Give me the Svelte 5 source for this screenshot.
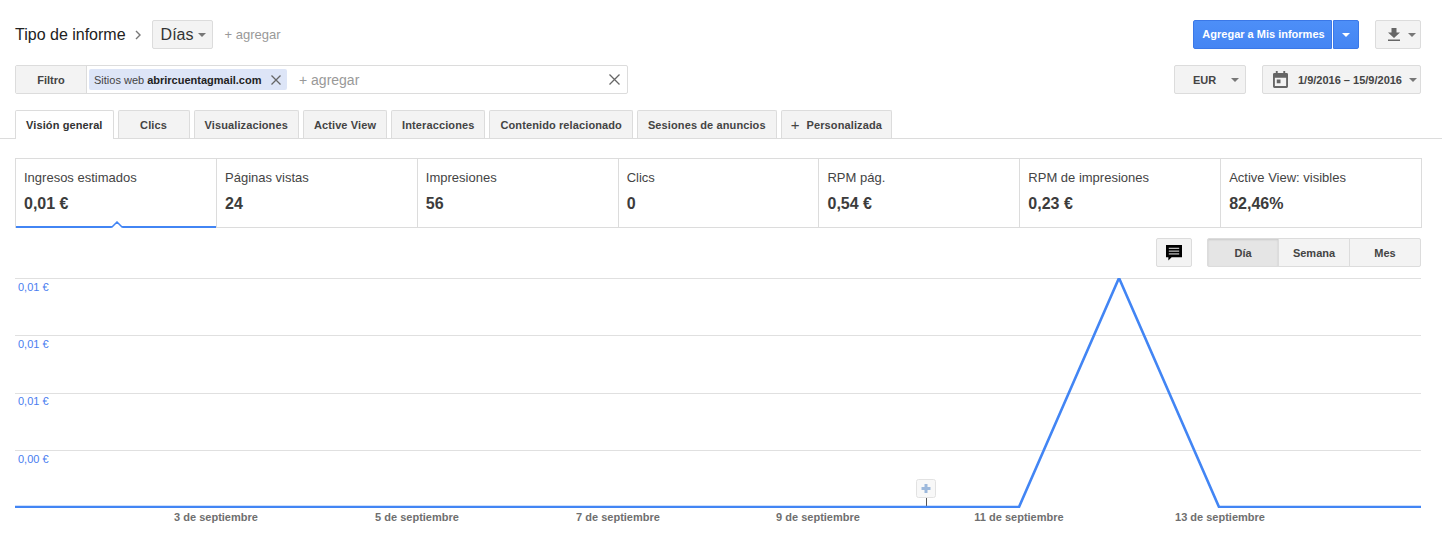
<script>
  const tabs = ['Visión general', 'Clics', 'Visualizaciones', 'Active View', 'Interacciones', 'Contenido relacionado', 'Sesiones de anuncios'];
  const metrics = [
    { label: 'Ingresos estimados', value: '0,01 €' },
    { label: 'Páginas vistas', value: '24' },
    { label: 'Impresiones', value: '56' },
    { label: 'Clics', value: '0' },
    { label: 'RPM pág.', value: '0,54 €' },
    { label: 'RPM de impresiones', value: '0,23 €' },
    { label: 'Active View: visibles', value: '82,46%' }
  ];
  const grid = [
    { y: 40, ty: 53, label: '0,01 €' },
    { y: 97, ty: 110, label: '0,01 €' },
    { y: 155, ty: 167, label: '0,01 €' },
    { y: 212, ty: 225, label: '0,00 €' }
  ];
  const days = [
    { x: 216, label: '3 de septiembre' },
    { x: 417, label: '5 de septiembre' },
    { x: 618, label: '7 de septiembre' },
    { x: 818, label: '9 de septiembre' },
    { x: 1019, label: '11 de septiembre' },
    { x: 1220, label: '13 de septiembre' }
  ];
</script>

<div class="page">
  <div class="row top">
    <span class="title">Tipo de informe</span>
    <svg class="chev" width="6" height="10" viewBox="0 0 6 10"><path d="M1 1l4 4-4 4" fill="none" stroke="#777" stroke-width="1.4"/></svg>
    <button class="btn dias">Días <i class="caret"></i></button>
    <span class="add">+ agregar</span>
    <div class="spacer"></div>
    <div class="split">
      <button class="btn blue main"><span>Agregar a Mis informes</span></button>
      <button class="btn blue side"><i class="caret white"></i></button>
    </div>
    <button class="btn download">
      <svg width="12" height="13" viewBox="0 0 12 13"><path d="M3.500 0h5v4.500H12L6 10 0 4.500h3.500zM0 11.500h12V13H0z" fill="#666"/></svg>
      <i class="caret"></i>
    </button>
  </div>

  <div class="row second">
    <div class="filter">
      <div class="filter-label">Filtro</div>
      <div class="chip">
        <span class="chip-name">Sitios web</span> <b>abrircuentagmail.com</b>
        <svg class="chip-x" width="10" height="10" viewBox="0 0 10 10"><path d="M.5.5l9 9M9.5.5l-9 9" stroke="#666" stroke-width="1.3"/></svg>
      </div>
      <span class="filter-add">+ agregar</span>
      <svg class="filter-x" width="11" height="11" viewBox="0 0 11 11"><path d="M.5.5l10 10M10.500.5l-10 10" stroke="#666" stroke-width="1.3"/></svg>
    </div>
    <div class="spacer"></div>
    <button class="btn eur">EUR <i class="caret"></i></button>
    <button class="btn date">
      <svg width="15" height="17" viewBox="0 0 16 18"><path d="M3 0h2v2h6V0h2v2h1.500A1.500 1.500 0 0 1 16 3.500V16.500A1.500 1.500 0 0 1 14.500 18H1.500A1.500 1.500 0 0 1 0 16.500V3.500A1.500 1.500 0 0 1 1.500 2H3zM2 7v9h12V7z" fill="#666"/><rect x="4" y="9" width="4" height="4" fill="#666"/></svg>
      <span>1/9/2016 – 15/9/2016</span>
      <i class="caret"></i>
    </button>
  </div>

  <div class="tabs">
    {#each tabs as tab, i}
      <div class="tab" class:active={i === 0}>{tab}</div>
    {/each}
    <div class="tab custom"><span class="plus">+</span>Personalizada</div>
  </div>

  <div class="metrics">
    {#each metrics as m, i}
      <div class="metric" class:selected={i === 0}>
        <div class="m-label">{m.label}</div>
        <div class="m-value">{m.value}</div>
        {#if i === 0}
          <svg class="notch" width="12" height="7" viewBox="0 0 12 7"><path d="M0 7l6-6 6 6z" fill="#fff"/><path d="M0 6h1l5-5 5 5h1" fill="none" stroke="#4285f4" stroke-width="1.500"/></svg>
        {/if}
      </div>
    {/each}
  </div>

  <div class="controls">
    <button class="btn note">
      <svg width="16" height="16" viewBox="0 0 17 17"><path d="M0 0h17v13H6l-3.500 3.500V13H0z" fill="#000"/><path d="M3 3.500h11M3 6.500h11M3 9.500h11" stroke="#fff" stroke-width="1"/></svg>
    </button>
    <div class="range">
      <button class="btn seg on">Día</button>
      <button class="btn seg">Semana</button>
      <button class="btn seg">Mes</button>
    </div>
  </div>

  <div class="chart">
    <svg width="1442" height="300" viewBox="0 0 1442 300">
      <defs>
        <clipPath id="plot"><rect x="15" y="40" width="1406" height="230"/></clipPath>
      </defs>
      {#each grid as g}
        <line x1="15" x2="1421" y1={g.y + 0.5} y2={g.y + 0.5} stroke="#e0e0e0"/>
        <text x="18" y={g.ty} class="y-label">{g.label}</text>
      {/each}
      <line x1="926.500" x2="926.500" y1="259" y2="269" stroke="#555"/>
      <polyline points="15,269 1019,269 1119,40 1219,269 1421,269" clip-path="url(#plot)" fill="none" stroke="#4285f4" stroke-width="2.600"/>
      {#each days as d}
        <text x={d.x} y="283" class="x-label" text-anchor="middle">{d.label}</text>
      {/each}
      <rect x="916.500" y="241.500" width="19" height="18" rx="2" fill="#f8f8f8" stroke="#e2e2e2"/>
      <path d="M926 246v9M921.500 250.500h9" stroke="#9db9dc" stroke-width="3"/>
    </svg>
  </div>
</div>

<style>
  :global(body) {
    margin: 0;
    background: #fff;
    font-family: "Liberation Sans", Arial, sans-serif;
    color: #333;
  }
  .page {
    width: 1442px;
    height: 538px;
    overflow: hidden;
    padding-top: 20px;
    box-sizing: border-box;
  }
  .row {
    display: flex;
    align-items: center;
    padding: 0 21px 0 15px;
    height: 29px;
  }
  .spacer { flex: 1; }
  .btn {
    font-family: inherit;
    box-sizing: border-box;
    height: 29px;
    background: #f3f3f3;
    border: 1px solid #dcdcdc;
    border-radius: 2px;
    color: #444;
    font-size: 11px;
    font-weight: bold;
    padding: 0;
    display: flex;
    align-items: center;
    justify-content: center;
  }
  .caret {
    display: inline-block;
    width: 0;
    height: 0;
    border-left: 4px solid transparent;
    border-right: 4px solid transparent;
    border-top: 4px solid #777;
  }
  .caret.white { border-top-color: #fff; }
  .title { font-size: 16px; color: #222; }
  .chev { margin-left: 9px; }
  .dias {
    margin-left: 11px;
    width: 61px;
    justify-content: flex-start;
    padding-left: 8px;
    font-size: 16px;
    font-weight: normal;
    color: #333;
    gap: 5px;
  }
  .add { margin-left: 12px; font-size: 13px; color: #999; }
  .split { display: flex; gap: 1px; }
  .blue { background: linear-gradient(#4d8ff8, #4585f3); border-color: #3b78e7; color: #fff; }
  .main { width: 139px; border-radius: 2px 0 0 2px; }
  .main span { margin-top: -2px; margin-left: 2px; }
  .side { width: 26px; border-radius: 0 2px 2px 0; }
  .download { margin-left: 16px; width: 46px; justify-content: flex-start; padding-left: 12px; gap: 8px; }

  .second { margin-top: 16px; }
  .filter {
    box-sizing: border-box;
    width: 613px;
    height: 29px;
    border: 1px solid #dcdcdc;
    border-radius: 2px;
    display: flex;
    align-items: center;
  }
  .filter-label {
    width: 71px;
    box-sizing: border-box;
    align-self: stretch;
    background: #f3f3f3;
    border-right: 1px solid #dcdcdc;
    display: flex;
    align-items: center;
    justify-content: center;
    font-size: 11px;
    font-weight: bold;
    color: #444;
  }
  .chip {
    margin-left: 2px;
    width: 198px;
    height: 21px;
    box-sizing: border-box;
    padding-left: 5px;
    background: #dde5f7;
    border-radius: 2px;
    font-size: 11px;
    display: flex;
    align-items: center;
    white-space: pre;
    color: #222;
  }
  .chip-name { color: #444; }
  .chip b { margin-left: 3px; }
  .chip-x { margin-left: 10px; }
  .filter-add { margin-left: 12px; margin-top: 1px; font-size: 14px; color: #999; }
  .filter-x { margin-left: auto; margin-right: 7px; }
  .eur { width: 72px; justify-content: flex-start; padding-left: 18px; gap: 15px; }
  .date { margin-left: 16px; width: 159px; justify-content: flex-start; padding-left: 10px; gap: 10px; }
  .date i { margin-left: -3px; }

  .tabs {
    display: flex;
    gap: 4px;
    margin-top: 16px;
    padding-left: 15px;
    height: 28px;
    border-bottom: 1px solid #dcdcdc;
    font-size: 11px;
    font-weight: bold;
    color: #444;
    letter-spacing: 0.11px;
  }
  .tab {
    height: 28px;
    min-width: 72px;
    padding: 0 10px;
    box-sizing: border-box;
    background: #f3f3f3;
    border: 1px solid #dcdcdc;
    border-bottom: none;
    border-radius: 2px 2px 0 0;
    display: flex;
    align-items: center;
    justify-content: center;
  }
  .tab.active { background: #fff; height: 29px; color: #333; }
  .tab.custom { padding: 0 9px; }
  .plus { font-size: 15px; font-weight: normal; margin-right: 7px; }

  .metrics {
    box-sizing: border-box;
    margin: 19px 20px 0 15px;
    height: 70px;
    width: 1407px;
    display: grid;
    grid-template-columns: 200px repeat(6, 1fr);
    border: 1px solid #dcdcdc;
  }
  .metric {
    position: relative;
    padding: 11px 8px 0 8px;
    border-left: 1px solid #dcdcdc;
  }
  .metric:first-child { border-left: none; }
  .metric.selected { margin-bottom: -1px; border-bottom: 2px solid #4285f4; }
  .m-label { font-size: 13px; color: #444; line-height: 15px; }
  .m-value { font-size: 16px; font-weight: bold; color: #3c3c3c; margin-top: 10px; line-height: 18px; }
  .notch { position: absolute; left: 95px; bottom: -2px; }

  .controls {
    display: flex;
    justify-content: flex-end;
    margin-top: 10px;
    padding-right: 21px;
    height: 29px;
  }
  .note { width: 36px; margin-right: 15px; }
  .range { display: flex; }
  .seg { width: 72px; border-radius: 0; margin-left: -1px; }
  .seg:first-child { margin-left: 0; border-radius: 2px 0 0 2px; }
  .seg:last-child { border-radius: 0 2px 2px 0; }
  .seg.on { background: #e5e5e5; box-shadow: inset 0 1px 2px rgba(0,0,0,0.12); }

  .chart { margin-top: -29px; height: 300px; }
  .chart svg { display: block; }
  .y-label { font-size: 11px; fill: #4a7df0; }
  .x-label { font-size: 11px; font-weight: bold; fill: #6f6f6f; }
</style>
